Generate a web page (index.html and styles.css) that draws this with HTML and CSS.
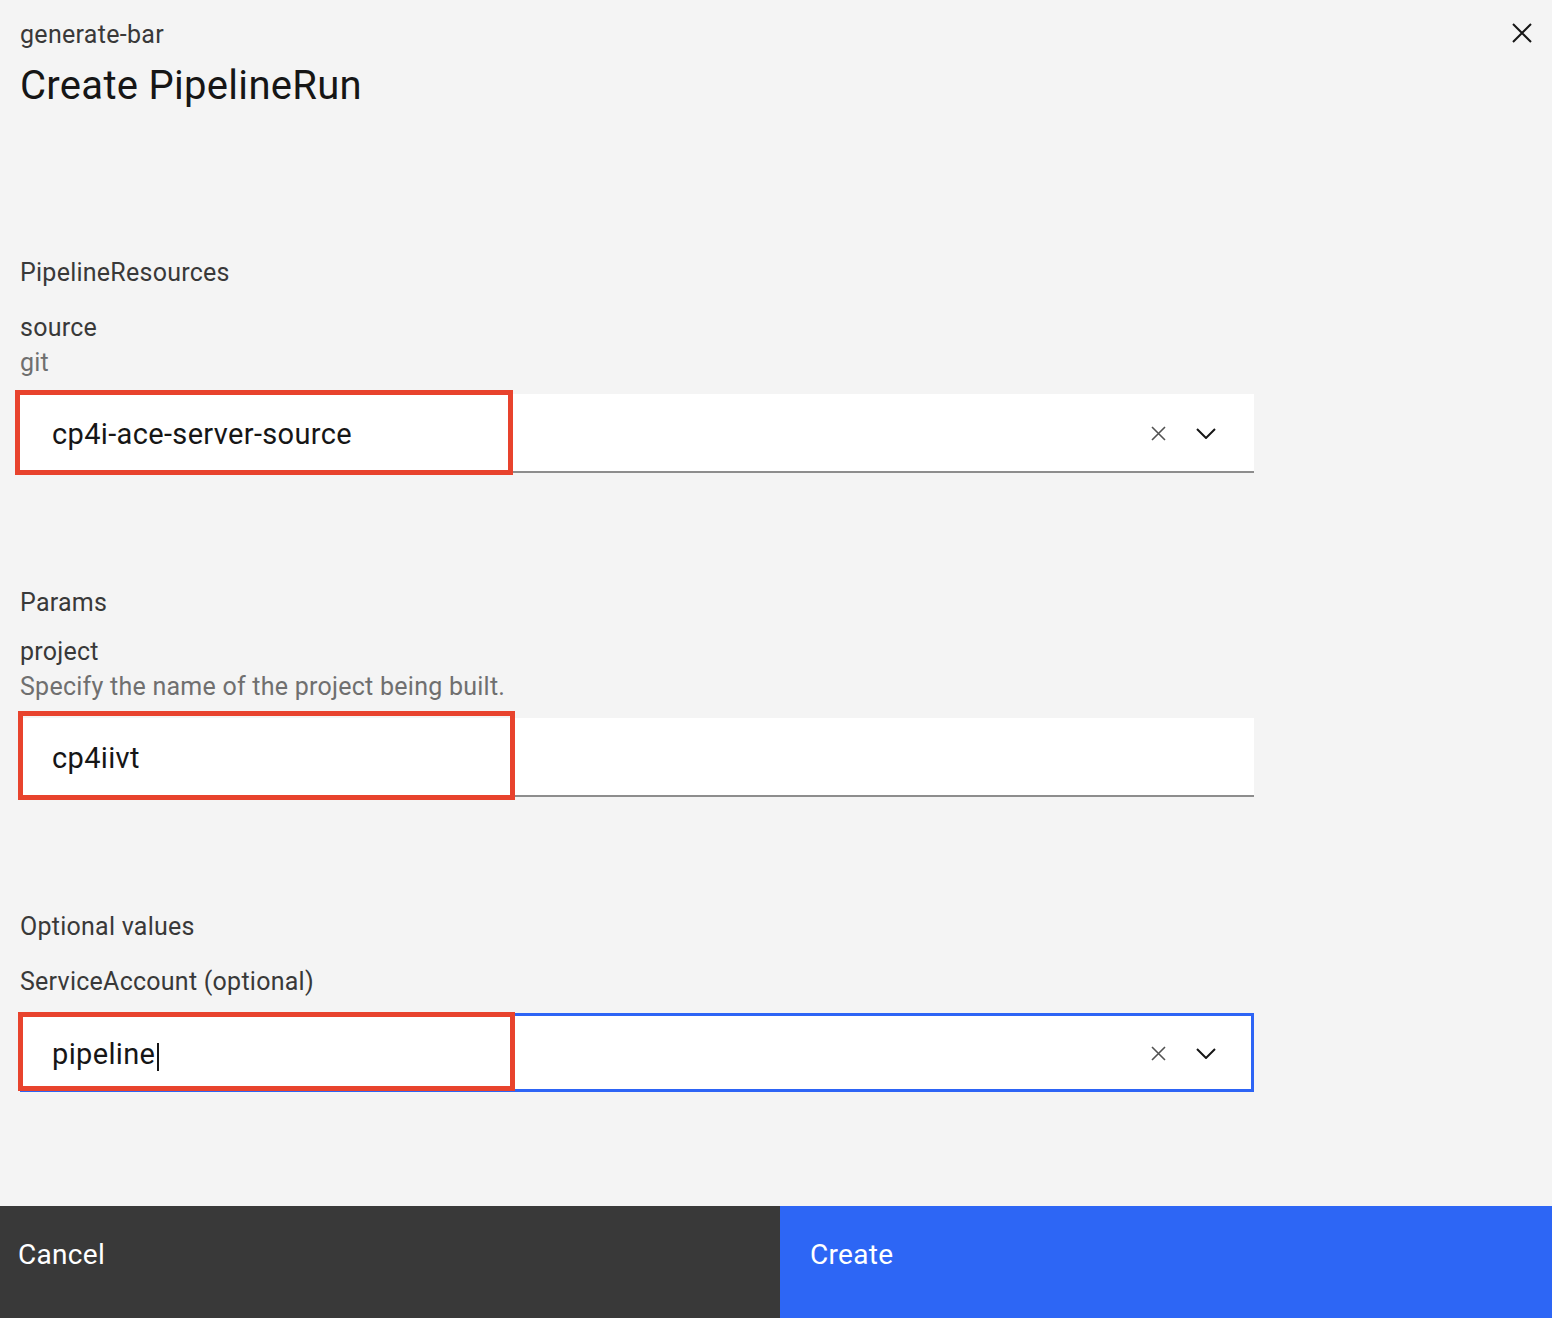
FILE: index.html
```html
<!DOCTYPE html>
<html lang="en">
<head>
<meta charset="utf-8">
<title>Create PipelineRun</title>
<link rel="stylesheet" href="styles.css">
</head>
<body>
<div class="modal">
  <header class="modal-header">
    <div class="heading">
      <div class="eyebrow">generate-bar</div>
      <h1 class="title">Create PipelineRun</h1>
    </div>
    <button class="close" aria-label="Close">
      <svg width="20" height="20" viewBox="0 0 20 20"><path d="M1 1L19 19M19 1L1 19" stroke="#161616" stroke-width="2" fill="none"/></svg>
    </button>
  </header>

  <main class="modal-body">
    <section class="section section--first">
      <div class="section-title">PipelineResources</div>
      <div class="field-label">source</div>
      <div class="helper">git</div>
      <div class="field">
        <span class="value">cp4i-ace-server-source</span>
        <span class="icon-clear"><svg width="15" height="15" viewBox="0 0 15 15"><path d="M1 1L14 14M14 1L1 14" stroke="#525252" stroke-width="1.6" fill="none"/></svg></span>
        <span class="icon-chevron"><svg width="20" height="11" viewBox="0 0 20 11"><path d="M1 1L10 10L19 1" stroke="#161616" stroke-width="2" fill="none"/></svg></span>
        <span class="mark mark--one"></span>
      </div>
    </section>

    <section class="section section--params">
      <div class="section-title">Params</div>
      <div class="field-label">project</div>
      <div class="helper">Specify the name of the project being built.</div>
      <div class="field">
        <span class="value">cp4iivt</span>
        <span class="mark mark--two"></span>
      </div>
    </section>

    <section class="section">
      <div class="section-title">Optional values</div>
      <div class="field-label">ServiceAccount (optional)</div>
      <div class="field field--focus">
        <span class="value">pipeline<span class="caret"></span></span>
        <span class="icon-clear"><svg width="15" height="15" viewBox="0 0 15 15"><path d="M1 1L14 14M14 1L1 14" stroke="#525252" stroke-width="1.6" fill="none"/></svg></span>
        <span class="icon-chevron"><svg width="20" height="11" viewBox="0 0 20 11"><path d="M1 1L10 10L19 1" stroke="#161616" stroke-width="2" fill="none"/></svg></span>
        <span class="mark mark--three"></span>
      </div>
    </section>
  </main>

  <footer class="modal-footer">
    <button class="btn btn--secondary">Cancel</button>
    <button class="btn btn--primary">Create</button>
  </footer>
</div>
</body>
</html>
```

FILE: styles.css
```css
* { box-sizing: border-box; }

html, body {
  margin: 0;
  padding: 0;
}

body {
  width: 1552px;
  height: 1318px;
  overflow: hidden;
  background: #f4f4f4;
  font-family: Roboto, "Noto Sans", "Liberation Sans", sans-serif;
  color: #161616;
}

.modal {
  display: flex;
  flex-direction: column;
  height: 1318px;
}

.modal-header {
  display: flex;
  justify-content: space-between;
  align-items: flex-start;
  padding: 19px 20px 0 20px;
}

.eyebrow {
  font-size: 25px;
  line-height: 32px;
  letter-spacing: 0.3px;
  color: #393939;
}

.title {
  margin: 11px 0 0 0;
  font-size: 40px;
  line-height: 48px;
  font-weight: 400;
  letter-spacing: 0.3px;
  color: #161616;
}

.close {
  margin-top: 4px;
  padding: 0;
  border: 0;
  background: none;
  width: 20px;
  height: 20px;
  display: block;
}
.close svg { display: block; }

.modal-body {
  padding: 0 298px 0 20px;
}

.section { margin-top: 114px; }
.section--first { margin-top: 147px; }

.section-title,
.field-label,
.helper {
  font-size: 25px;
  line-height: 32px;
  letter-spacing: 0.25px;
}

.section-title { color: #393939; }

.field-label {
  margin-top: 23px;
  color: #393939;
}
.section--params .field-label { margin-top: 17px; }

.helper {
  margin-top: 3px;
  color: #6f6f6f;
}

.field {
  position: relative;
  margin-top: 15px;
  height: 79px;
  background: #ffffff;
  border-bottom: 2px solid #8d8d8d;
  display: flex;
  align-items: center;
  padding: 2px 38px 0 32px;
}

.field--focus {
  border-bottom: 0;
  box-shadow: inset 0 0 0 3px #2d64f5;
}

.value {
  flex: 1;
  font-size: 29px;
  letter-spacing: 0.35px;
  color: #161616;
  white-space: nowrap;
}

.caret {
  display: inline-block;
  width: 2px;
  height: 28px;
  margin-left: 2px;
  background: #161616;
  vertical-align: -7px;
}

.icon-clear,
.icon-chevron {
  display: flex;
  align-items: center;
}
.icon-clear svg, .icon-chevron svg { display: block; }
.icon-chevron { margin-left: 30px; }

.mark {
  position: absolute;
  border: 5px solid #e8432d;
  pointer-events: none;
}
.mark--one { left: -5px; top: -4px; width: 498px; height: 85px; }
.mark--two { left: -2px; top: -7px; width: 497px; height: 89px; }
.mark--three { left: -2px; top: -1px; width: 497px; height: 79px; }

.modal-footer {
  margin-top: auto;
  height: 112px;
  display: flex;
}

.btn {
  border: 0;
  margin: 0;
  height: 112px;
  text-align: left;
  font-family: Roboto, "Noto Sans", "Liberation Sans", sans-serif;
  font-size: 28px;
  line-height: 36px;
  letter-spacing: 0.3px;
  color: #ffffff;
  display: flex;
  align-items: flex-start;
  padding-top: 31px;
}

.btn--secondary {
  width: 780px;
  background: #393939;
  padding-left: 18px;
}

.btn--primary {
  flex: 1;
  background: #2d66f5;
  padding-left: 30px;
}
```
